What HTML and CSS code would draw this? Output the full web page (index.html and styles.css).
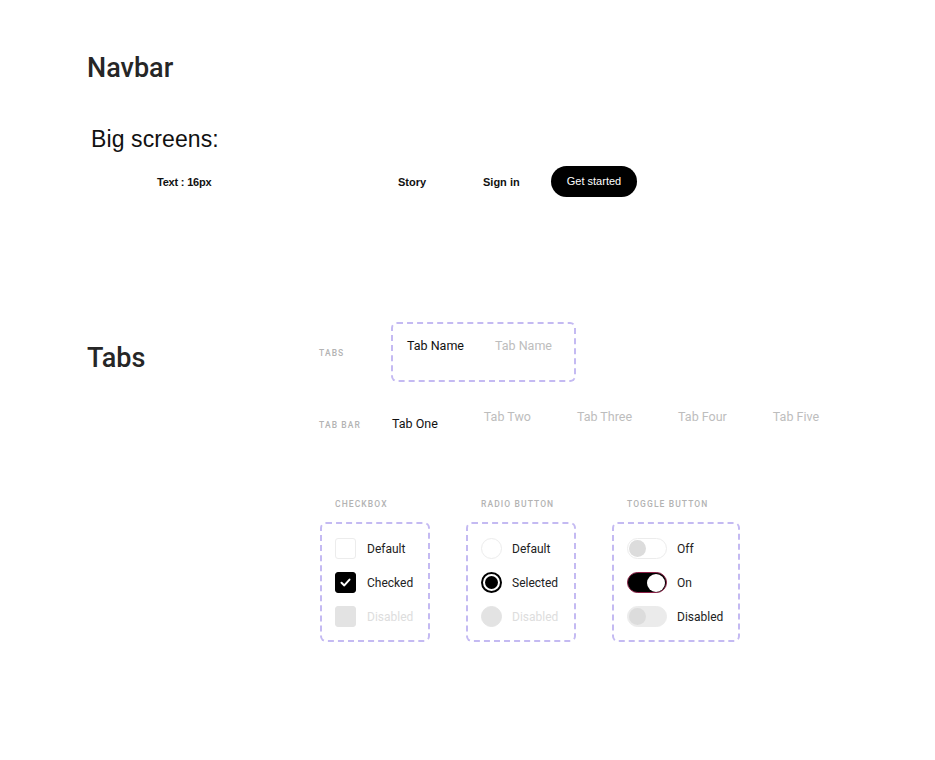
FILE: index.html
```html
<!DOCTYPE html>
<html lang="en">
<head>
    <meta charset="UTF-8">
    <meta name="viewport" content="width=device-width, initial-scale=1.0">
    <title>UI Components</title>
    <link rel="stylesheet" href="styles.css">
</head>
<body>
    <div class="page">
        <section class="navbar-section">
            <h1 class="section-title">Navbar</h1>
            <h2 class="subtitle">Big screens:</h2>
            <nav class="nav-row">
                <div class="nav-brand">Text : 16px</div>
                <a class="nav-link story">Story</a>
                <a class="nav-link signin">Sign in</a>
                <button class="nav-button">Get started</button>
            </nav>
        </section>

        <section class="tabs-section">
            <div class="tabs-heading">
                <h1 class="section-title">Tabs</h1>
            </div>
            <div class="tabs-content">
                <div class="tabs-row">
                    <div class="row-label">Tabs</div>
                    <div class="tab-box">
                        <span class="tab active">Tab Name</span>
                        <span class="tab">Tab Name</span>
                    </div>
                </div>

                <div class="tabbar-row">
                    <div class="row-label tabbar-label">Tab bar</div>
                    <span class="tab active">Tab One</span>
                    <span class="tab">Tab Two</span>
                    <span class="tab">Tab Three</span>
                    <span class="tab">Tab Four</span>
                    <span class="tab">Tab Five</span>
                </div>

                <div class="controls-row">
                    <div class="control-group">
                        <div class="group-label">Checkbox</div>
                        <div class="control-box">
                            <div class="control-item">
                                <span class="checkbox"></span>
                                <span class="control-text">Default</span>
                            </div>
                            <div class="control-item">
                                <span class="checkbox checked">
                                    <svg width="13" height="13" viewBox="0 0 13 13"><polyline points="2.5,6.8 5.3,9.4 10.5,3.6" fill="none" stroke="#fff" stroke-width="2" stroke-linecap="round" stroke-linejoin="round"/></svg>
                                </span>
                                <span class="control-text">Checked</span>
                            </div>
                            <div class="control-item">
                                <span class="checkbox disabled"></span>
                                <span class="control-text muted">Disabled</span>
                            </div>
                        </div>
                    </div>

                    <div class="control-group">
                        <div class="group-label">Radio button</div>
                        <div class="control-box">
                            <div class="control-item">
                                <span class="radio"></span>
                                <span class="control-text">Default</span>
                            </div>
                            <div class="control-item">
                                <span class="radio selected"></span>
                                <span class="control-text">Selected</span>
                            </div>
                            <div class="control-item">
                                <span class="radio disabled"></span>
                                <span class="control-text muted">Disabled</span>
                            </div>
                        </div>
                    </div>

                    <div class="control-group wide">
                        <div class="group-label">Toggle button</div>
                        <div class="control-box">
                            <div class="control-item">
                                <span class="toggle"><span class="knob"></span></span>
                                <span class="control-text">Off</span>
                            </div>
                            <div class="control-item">
                                <span class="toggle on"><span class="knob"></span></span>
                                <span class="control-text">On</span>
                            </div>
                            <div class="control-item">
                                <span class="toggle disabled"><span class="knob"></span></span>
                                <span class="control-text">Disabled</span>
                            </div>
                        </div>
                    </div>
                </div>
            </div>
        </section>
    </div>
</body>
</html>
```

FILE: styles.css
```css
* {
    margin: 0;
    padding: 0;
    box-sizing: border-box;
}

body {
    background: #ffffff;
    font-family: Roboto, "Noto Sans", sans-serif;
    color: #222;
}

.page {
    padding-top: 52px;
}

.section-title {
    font-size: 27px;
    line-height: 32px;
    font-weight: 500;
    color: #262626;
}

/* navbar */
.navbar-section {
    padding-left: 87px;
}

.subtitle {
    font-family: "Liberation Sans", Arial, sans-serif;
    font-weight: 400;
    font-size: 23px;
    line-height: 28px;
    color: #111;
    margin: 41px 0 0 4px;
    letter-spacing: 0.1px;
}

.nav-row {
    display: flex;
    align-items: center;
    height: 31px;
    margin: 13px 0 0 70px;
    font-family: "Liberation Sans", Arial, sans-serif;
    font-size: 11px;
}

.nav-brand {
    width: 241px;
    font-weight: bold;
    color: #111;
    letter-spacing: -0.2px;
}

.nav-link {
    font-weight: bold;
    color: #111;
}

.story {
    width: 85px;
}

.signin {
    width: 68px;
}

.nav-button {
    width: 86px;
    height: 31px;
    border: none;
    border-radius: 16px;
    background: #000;
    color: #fff;
    font-family: "Liberation Sans", Arial, sans-serif;
    font-size: 11px;
    padding-bottom: 1px;
}

/* tabs */
.tabs-section {
    display: flex;
    margin-top: 125px;
}

.tabs-heading {
    width: 319px;
    padding: 20px 0 0 87px;
}

.tabs-row {
    display: flex;
    align-items: center;
}

.row-label {
    width: 72px;
    font-size: 8.5px;
    line-height: 12px;
    font-weight: 500;
    letter-spacing: 1.1px;
    text-transform: uppercase;
    color: #b3b3b3;
    padding-top: 1px;
}

.tab-box {
    width: 185px;
    height: 60px;
    border: 2px dashed #c4baf2;
    border-radius: 6px;
    display: flex;
    align-items: flex-start;
    gap: 31px;
    padding: 14px 0 0 14px;
}

.tab {
    font-size: 12.5px;
    line-height: 16px;
    color: #bdbdbd;
}

.tab.active {
    color: #111;
}

.tabbar-row {
    display: flex;
    align-items: flex-start;
    gap: 46px;
    margin-top: 27px;
}

.tabbar-label {
    width: 27px;
    margin-top: 9px;
    white-space: nowrap;
}

.tabbar-row .tab.active {
    margin-top: 7px;
}

/* controls */
.controls-row {
    display: flex;
    gap: 36px;
    margin: 66px 0 0 1px;
}

.control-group {
    width: 110px;
}

.control-group.wide {
    width: 128px;
}

.group-label {
    font-size: 8.5px;
    line-height: 12px;
    font-weight: 500;
    letter-spacing: 1.1px;
    text-transform: uppercase;
    color: #b3b3b3;
    padding-left: 15px;
    margin-bottom: 12px;
    white-space: nowrap;
}

.control-box {
    border: 2px dashed #c4baf2;
    border-radius: 6px;
    padding: 14px 13px 13px;
    display: flex;
    flex-direction: column;
    gap: 13px;
}

.control-item {
    display: flex;
    align-items: center;
    gap: 10px;
    height: 21px;
}

.control-text {
    font-size: 12px;
    color: #222;
}

.control-text.muted {
    color: #ddd;
}

.checkbox {
    width: 21px;
    height: 21px;
    border: 1px solid #ececec;
    border-radius: 3px;
    display: flex;
    align-items: center;
    justify-content: center;
    margin-right: 1px;
}

.checkbox.checked {
    background: #000;
    border-color: #000;
}

.checkbox.disabled {
    background: #e3e3e3;
    border-color: #e3e3e3;
}

.radio {
    width: 21px;
    height: 21px;
    border: 1px solid #ececec;
    border-radius: 50%;
    display: flex;
    align-items: center;
    justify-content: center;
}

.radio.selected {
    border: 2px solid #000;
}

.radio.selected::after {
    content: "";
    width: 13px;
    height: 13px;
    border-radius: 50%;
    background: #000;
}

.radio.disabled {
    background: #e3e3e3;
    border-color: #e3e3e3;
}

.toggle {
    width: 40px;
    height: 21px;
    border: 1px solid #ececec;
    border-radius: 11px;
    background: #fff;
    display: flex;
    align-items: center;
    padding: 0 1px;
}

.toggle .knob {
    width: 17px;
    height: 17px;
    border-radius: 50%;
    background: #dcdcdc;
}

.toggle.on {
    background: #000;
    border-color: #8a1f45;
    justify-content: flex-end;
}

.toggle.on .knob {
    background: #fff;
    width: 18px;
    height: 18px;
}

.toggle.disabled {
    background: #ebebeb;
    border-color: #ebebeb;
}
```
